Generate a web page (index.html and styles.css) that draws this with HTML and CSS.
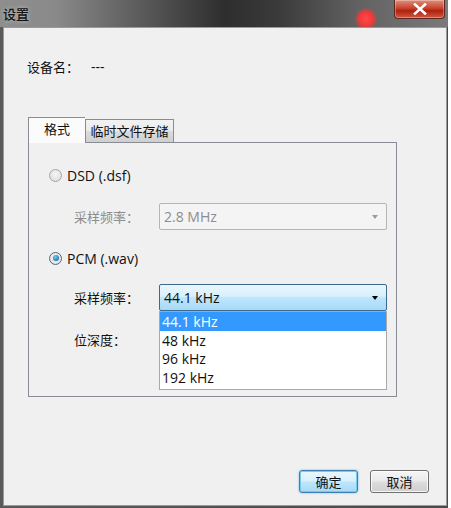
FILE: index.html
```html
<!DOCTYPE html>
<html lang="zh">
<head>
<meta charset="utf-8">
<title>设置</title>
<link rel="stylesheet" href="styles.css">
</head>
<body>
<div class="window">
  <div class="titlebar">
    <span class="title">设置</span>
    <span class="glow"></span>
    <span class="close">
      <svg width="16" height="12" viewBox="0 0 16 12"><path d="M3 1.5 L13 10.5 M13 1.5 L3 10.5" stroke="#fff" stroke-width="2.6" stroke-linecap="square"/></svg>
    </span>
  </div>
  <div class="client">
    <div class="device"><span class="cjk">设备名：</span><span class="dash">---</span></div>
    <div class="tabs">
      <div class="tabstrip">
        <div class="tab active">格式</div>
        <div class="tab">临时文件存储</div>
      </div>
      <div class="panel">
        <div class="radio-row"><span class="radio"></span><span>DSD (.dsf)</span></div>
        <div class="field disabled">
          <span class="label">采样频率：</span>
          <div class="select"><span>2.8 MHz</span><span class="arrow"></span></div>
        </div>
        <div class="radio-row pcm"><span class="radio checked"></span><span>PCM (.wav)</span></div>
        <div class="field open">
          <span class="label">采样频率：</span>
          <div class="select focus"><span>44.1 kHz</span><span class="arrow"></span></div>
          <ul class="dropdown">
            <li class="sel">44.1 kHz</li>
            <li>48 kHz</li>
            <li>96 kHz</li>
            <li>192 kHz</li>
          </ul>
        </div>
        <div class="field depth">
          <span class="label">位深度：</span>
        </div>
      </div>
    </div>
    <div class="buttons">
      <button class="btn default">确定</button>
      <button class="btn">取消</button>
    </div>
  </div>
</div>
</body>
</html>
```
FILE: styles.css
```css
html, body {
  margin: 0;
  padding: 0;
  background: #ffffff;
}
body {
  width: 451px;
  height: 508px;
  overflow: hidden;
  font-family: "Open Sans", "Noto Sans CJK SC", sans-serif;
  font-size: 14px;
  color: #101010;
}
.cjk {
  font-family: "Noto Sans CJK SC", sans-serif;
  font-size: 13px;
}
.window {
  width: 448px;
  height: 508px;
  background: linear-gradient(90deg, #5a5a5a 0%, #4a4a4a 100%);
  display: flex;
  flex-direction: column;
  box-sizing: border-box;
}
.titlebar {
  height: 27px;
  position: relative;
  display: flex;
  align-items: flex-start;
  background: linear-gradient(90deg, #8e8e8e 0%, #8a8a8a 12%, #5e5e5e 30%, #2e2e2e 50%, #3a3a3a 62%, #626262 80%, #7a7a7a 100%);
  flex: none;
}
.title {
  font-family: "Noto Sans CJK SC", sans-serif;
  font-size: 13px;
  font-weight: 500;
  color: #111;
  padding: 4px 0 0 3px;
  text-shadow: 0 0 4px rgba(255,255,255,0.5);
}
.glow {
  position: absolute;
  left: 355px;
  top: 8px;
  width: 22px;
  height: 22px;
  border-radius: 50%;
  background: radial-gradient(circle, #ff4a4a 0%, #f03838 45%, rgba(220,40,40,0) 75%);
}
.close {
  position: absolute;
  right: 3px;
  top: 0;
  width: 51px;
  height: 19px;
  box-sizing: border-box;
  border: 1px solid #5a2a22;
  border-top: none;
  border-radius: 0 0 4px 4px;
  background: linear-gradient(180deg, #e0907c 0%, #c8442e 45%, #b0200f 60%, #d05a40 100%);
  display: flex;
  align-items: center;
  justify-content: center;
  box-shadow: inset 0 0 0 1px rgba(255,255,255,0.3);
}
.client {
  flex: 1;
  margin: 0 1px 2px 3px;
  border: 1px solid #9a9a9a;
  background: #f0f0f0;
  position: relative;
  display: flex;
  flex-direction: column;
}
.device {
  margin: 31px 0 0 23px;
  line-height: 16px;
  display: flex;
  gap: 12px;
}
.dash {
  font-family: "Open Sans", sans-serif;
}
.tabs {
  margin: 42px 0 0 24px;
  width: 369px;
}
.tabstrip {
  display: flex;
  align-items: flex-end;
  height: 25px;
}
.tab {
  font-family: "Noto Sans CJK SC", sans-serif;
  font-size: 13px;
  height: 23px;
  line-height: 22px;
  width: 89px;
  text-align: center;
  box-sizing: border-box;
  border: 1px solid #898c95;
  border-bottom: none;
  background: linear-gradient(180deg, #f2f2f2 0%, #ebebeb 50%, #dcdcdc 51%, #cfcfcf 100%);
}
.tab.active {
  width: 57px;
  height: 26px;
  line-height: 22px;
  background: #fbfbfb;
  position: relative;
  z-index: 1;
  margin-bottom: -1px;
  border-right: none;
}
.panel {
  border: 1px solid #898c95;
  background: #f0f0f0;
  height: 255px;
  box-sizing: border-box;
  position: relative;
  padding-top: 23px;
}
.radio-row {
  display: flex;
  align-items: center;
  gap: 5px;
  margin-left: 20px;
  height: 18px;
}
.radio {
  width: 13px;
  height: 13px;
  border-radius: 50%;
  border: 1px solid #a6a6a6;
  background: radial-gradient(circle at 50% 40%, #f6f6f6 0%, #d8d8d8 100%);
  box-sizing: border-box;
  position: relative;
}
.radio.checked {
  border-color: #4e6a86;
}
.radio.checked::after {
  content: "";
  position: absolute;
  left: 2.5px;
  top: 2.5px;
  width: 6px;
  height: 6px;
  border-radius: 50%;
  background: radial-gradient(circle at 40% 35%, #6fd0f0 0%, #1f6aa0 80%);
}
.field {
  display: flex;
  align-items: center;
  margin-left: 45px;
  margin-top: 19px;
  position: relative;
}
.field .label {
  font-family: "Noto Sans CJK SC", sans-serif;
  font-size: 13px;
  width: 85px;
}
.field.disabled .label {
  color: #8d8d8d;
}
.select {
  width: 228px;
  height: 27px;
  box-sizing: border-box;
  border: 1px solid #b5b5b5;
  border-radius: 2px;
  background: #f4f4f4;
  display: flex;
  align-items: center;
  justify-content: space-between;
  padding: 0 8px 0 4px;
  color: #8d8d8d;
}
.arrow {
  width: 0;
  height: 0;
  border-left: 3.5px solid transparent;
  border-right: 3.5px solid transparent;
  border-top: 4px solid #9a9a9a;
}
.select.focus {
  color: #101010;
  border-color: #3c6a8e;
  background: linear-gradient(180deg, #eaf6fd 0%, #d9f0fc 45%, #bee6fd 50%, #a7d9f5 100%);
}
.select.focus .arrow {
  border-top-color: #000;
}
.pcm {
  margin-top: 19px;
}
.field.open {
  margin-top: 17px;
}
.dropdown {
  position: absolute;
  left: 85px;
  top: 27px;
  width: 228px;
  margin: 0;
  padding: 0 0 2px;
  list-style: none;
  background: #ffffff;
  border: 1px solid #a9a9a9;
  box-sizing: border-box;
  z-index: 2;
}
.dropdown li {
  height: 18.7px;
  line-height: 19px;
  padding-left: 2px;
}
.dropdown li.sel {
  background: #3399ff;
  color: #ffffff;
}
.depth {
  margin-top: 20px;
  height: 16px;
}
.buttons {
  margin-top: auto;
  margin-bottom: 12px;
  margin-right: 17px;
  display: flex;
  justify-content: flex-end;
  gap: 12px;
}
.btn {
  width: 59px;
  height: 23px;
  font-family: "Noto Sans CJK SC", sans-serif;
  font-size: 13px;
  color: #101010;
  padding: 0;
  border: 1px solid #707070;
  border-radius: 3px;
  background: linear-gradient(180deg, #f6f6f6 0%, #eaeaea 48%, #dddddd 52%, #cfcfcf 100%);
  box-shadow: inset 0 0 0 1px rgba(255,255,255,0.8);
}
.btn.default {
  border-color: #3c7fb1;
  background: linear-gradient(180deg, #eaf6fd 0%, #d9f0fc 48%, #bee6fd 52%, #a7d9f5 100%);
  box-shadow: inset 0 0 0 1px #78c8f0, 0 0 2px #5fb3e6;
}
```
